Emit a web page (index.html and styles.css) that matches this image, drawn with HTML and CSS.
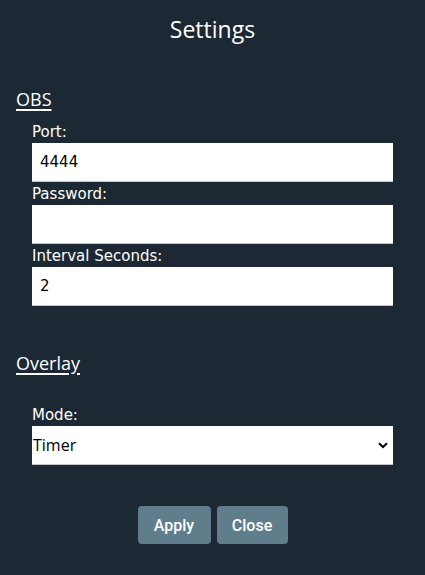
FILE: index.html
```html
<!DOCTYPE html>
<html>
<head>
<meta charset="utf-8">
<link rel="stylesheet" href="styles.css">
</head>
<body>
<div class="page">
  <h1 class="title">Settings</h1>
  <section class="group">
    <h2 class="group-title">OBS</h2>
    <div class="fields">
      <label class="label">Port:</label>
      <input class="input" type="text" value="4444">
      <label class="label">Password:</label>
      <input class="input" type="password" value="">
      <label class="label">Interval Seconds:</label>
      <input class="input" type="text" value="2">
    </div>
  </section>
  <section class="group overlay">
    <h2 class="group-title">Overlay</h2>
    <div class="fields mode">
      <label class="label">Mode:</label>
      <div class="select">
        <span class="select-text">Timer</span>
        <svg class="chev" width="10" height="7" viewBox="0 0 10 7"><path d="M1 1.2 L5 5 L9 1.2" fill="none" stroke="#000" stroke-width="2"/></svg>
      </div>
    </div>
  </section>
  <div class="actions">
    <button class="btn btn-apply">Apply</button>
    <button class="btn btn-close">Close</button>
  </div>
</div>
</body>
</html>
```
FILE: styles.css
```css
html, body {
  margin: 0;
  padding: 0;
  background: #1c2834;
  height: 100%;
}
.page {
  color: #fff;
  font-family: "Open Sans", "Noto Sans", sans-serif;
}
.title {
  margin: 0;
  padding-top: 12px;
  height: 50px;
  box-sizing: border-box;
  text-align: center;
  font-weight: 400;
  font-size: 23px;
  line-height: 34px;
}
.group {
  padding-left: 16px;
  padding-top: 37px;
}
.overlay {
  padding-top: 45px;
}
.group-title {
  margin: 0;
  font-weight: 400;
  font-size: 18px;
  line-height: 24px;
  text-decoration: underline;
  text-underline-offset: 3px;
  text-decoration-thickness: 2px;
}
.fields {
  display: flex;
  flex-direction: column;
  padding-left: 16px;
  padding-top: 9px;
}
.mode {
  padding-top: 28px;
}
.label {
  font-family: "DejaVu Sans", Verdana, sans-serif;
  font-size: 15px;
  line-height: 21px;
  height: 23px;
  padding-top: 2px;
  box-sizing: border-box;
  color: #fff;
}
.input, .select {
  box-sizing: border-box;
  width: 361px;
  height: 39px;
  border: none;
  border-bottom: 1px solid #c4c4c4;
  background: #fff;
  font-family: "DejaVu Sans", Verdana, sans-serif;
  font-size: 15px;
  color: #000;
  padding: 0 8px;
  margin: 0;
  outline: none;
}
.select {
  display: flex;
  align-items: center;
  justify-content: space-between;
  padding: 0 5px 0 1px;
  font-family: "Open Sans", "Noto Sans", sans-serif;
  font-size: 16px;
}
.actions {
  display: flex;
  justify-content: center;
  gap: 6px;
  padding-top: 41px;
}
.btn {
  background: #607d8b;
  color: #fff;
  border: none;
  border-radius: 4px;
  height: 38px;
  padding: 0;
  font-family: Roboto, "Open Sans", sans-serif;
  font-size: 16px;
  font-weight: 500;
}
.btn-apply { width: 73px; }
.btn-close { width: 71px; }
```
